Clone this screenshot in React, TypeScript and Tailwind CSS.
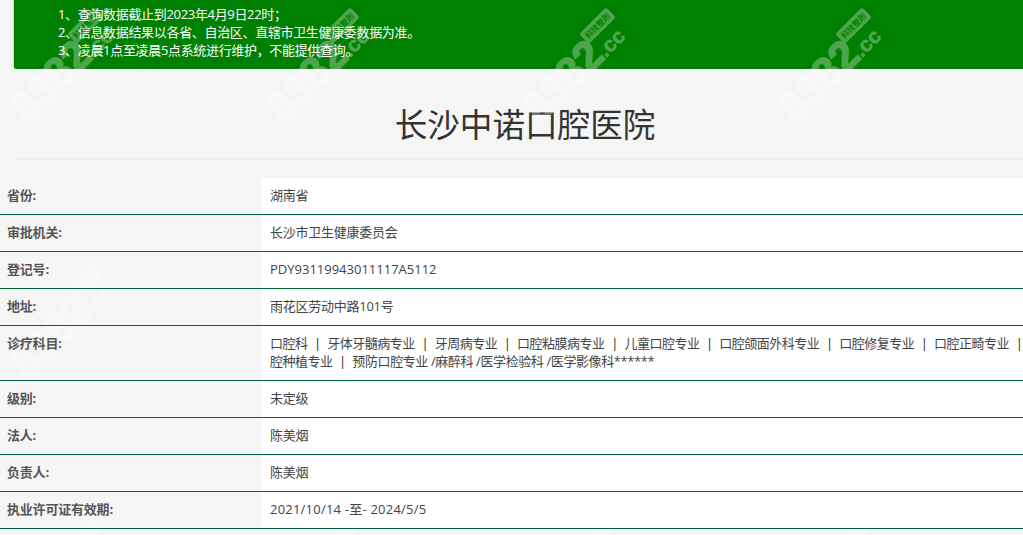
const subjects = ["口腔科", "牙体牙髓病专业", "牙周病专业", "口腔粘膜病专业", "儿童口腔专业", "口腔颌面外科专业", "口腔修复专业", "口腔正畸专业", "口腔种植专业"];

function Subjects() {
  return (
    <div className="w-[778px] tracking-[-0.5px]">
      {subjects.map((s) => (
        <span key={s}>
          {s}
          <span className="px-[6.6px] text-[#222]">|</span>
        </span>
      ))}
      <span className="tracking-[-0.4px]">预防口腔专业 /麻醉科 /医学检验科 /医学影像科******</span>
    </div>
  );
}

const cjk = "tracking-[-0.25px]";

const rows: [string, React.ReactNode, string][] = [
  ["省份:", <span className={cjk}>湖南省</span>, "h-[36px]"],
  ["审批机关:", <span className={cjk}>长沙市卫生健康委员会</span>, "h-[36px]"],
  ["登记号:", "PDY93119943011117A5112", "h-[36px]"],
  ["地址:", <span className={cjk}>雨花区劳动中路101号</span>, "h-[36px]"],
  ["诊疗科目:", <Subjects />, "h-[54px]"],
  ["级别:", <span className={cjk}>未定级</span>, "h-[36px]"],
  ["法人:", <span className={cjk}>陈美烟</span>, "h-[36px]"],
  ["负责人:", <span className={cjk}>陈美烟</span>, "h-[36px]"],
  ["执业许可证有效期:", <span className="tracking-[0.22px]">2021/10/14 -至- 2024/5/5</span>, "h-[36px]"],
];

function Mark({ onGreen }: { onGreen: boolean }) {
  return (
    <div className="w-[256px] h-[256px] shrink-0 relative">
      <div className="absolute left-[-12px] top-[50px] w-[140px] h-[60px] -rotate-[45deg] opacity-30 text-white font-['Liberation_Sans',sans-serif] font-bold">
        <div className="flex items-baseline justify-end">
          <span className="text-[43px] leading-[50px] tracking-[-0.5px] [-webkit-text-stroke:1.5px_white]">8382</span>
          <span className="text-[21px] leading-[50px] [-webkit-text-stroke:0.5px_white]">.cc</span>
        </div>
        <span
          className={`absolute right-[-7px] top-[4px] w-[38px] h-[14px] flex items-center justify-center rounded-[3px] bg-white text-[8px] leading-[14px] font-['Noto_Sans_CJK_SC',sans-serif] ${
            onGreen ? "text-[#008000]" : "text-white"
          }`}
        >
          科技整形
        </span>
      </div>
    </div>
  );
}

export default function App() {
  return (
    <div className="relative h-[535px] overflow-hidden bg-[#f5f5f5] text-[13px] text-[#333] font-['Open_Sans','Noto_Sans_CJK_SC',sans-serif]">
      <div className="absolute left-0 top-[256px] grid grid-cols-4 w-[1024px] pointer-events-none">
        {[0, 1, 2, 3, 4, 5, 6, 7].map((i) => <Mark key={i} onGreen={false} />)}
      </div>
      <div className="relative ml-[13px] h-[69px] bg-[#008000] border-l border-[#ebccd1] rounded-bl-[3px] pl-[44px] pt-[5px] text-white leading-[18px] tracking-[-0.33px]">
        <div>1、查询数据截止到2023年4月9日22时；</div>
        <div>2、信息数据结果以各省、自治区、直辖市卫生健康委数据为准。</div>
        <div>3、凌晨1点至凌晨5点系统进行维护，不能提供查询。</div>
      </div>
      <div className="relative ml-[13px] h-[91px] border-b border-[#eeeeee] flex items-center justify-center pt-[22px] pl-[14px]">
        <h1 className="text-[32.6px] leading-[40px] font-normal text-[#333]">长沙中诺口腔医院</h1>
      </div>
      <div className="relative mt-[18px]">
        {rows.map(([k, v, h]) => (
          <div key={k} className="flex border-b border-[#006633]">
            <div className={`w-[261px] shrink-0 pl-[7px] pt-[8px] font-bold text-[#555] leading-[18px] tracking-[-0.2px] ${h}`}>{k}</div>
            <div className={`flex-1 bg-white pl-[9px] pt-[8px] text-[#444] leading-[18px] ${h}`}>{v}</div>
          </div>
        ))}
      </div>
      <div className="absolute left-0 top-0 grid grid-cols-4 w-[1024px] pointer-events-none">
        {[0, 1, 2, 3].map((i) => <Mark key={i} onGreen />)}
      </div>
    </div>
  );
}
